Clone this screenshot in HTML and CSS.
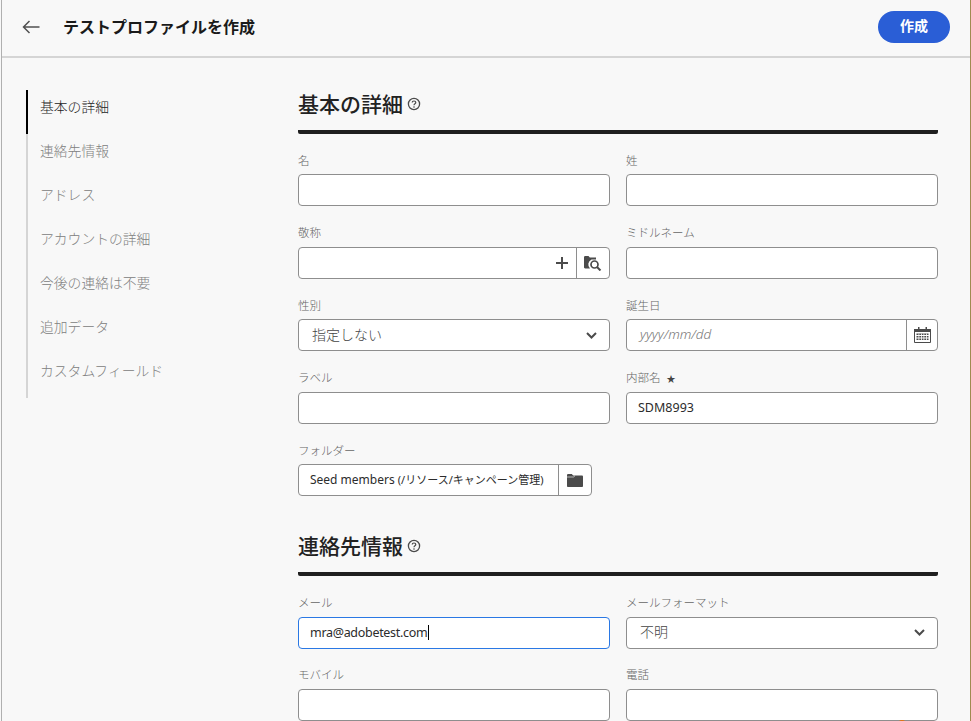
FILE: index.html
```html
<!DOCTYPE html>
<html lang="ja">
<head>
<meta charset="utf-8">
<title>テストプロファイルを作成</title>
<link rel="stylesheet" href="styles.css">
</head>
<body>
<div class="app">
  <header class="topbar">
    <svg class="back" width="18" height="14" viewBox="0 0 18 14"><path d="M17.500 7H1.500M7.500 1 1.500 7l6 6" fill="none" stroke="#505050" stroke-width="1.500"/></svg>
    <h1 class="title">テストプロファイルを作成</h1>
    <button class="primary">作成</button>
  </header>
  <div class="body">
    <nav class="side">
      <a class="nav active">基本の詳細</a>
      <a class="nav">連絡先情報</a>
      <a class="nav">アドレス</a>
      <a class="nav">アカウントの詳細</a>
      <a class="nav">今後の連絡は不要</a>
      <a class="nav">追加データ</a>
      <a class="nav">カスタムフィールド</a>
    </nav>
    <main class="main">
      <section class="sec">
        <h2 class="head">基本の詳細
          <svg class="help" width="14" height="14" viewBox="0 0 14 14"><circle cx="7" cy="7" r="5.600" fill="none" stroke="#4b4b4b" stroke-width="1.300"/><path d="M5.200 5.600c0-1 .8-1.600 1.800-1.600s1.800.6 1.800 1.500c0 1.300-1.800 1.300-1.800 2.700" fill="none" stroke="#4b4b4b" stroke-width="1.200"/><circle cx="7" cy="10" r=".8" fill="#4b4b4b"/></svg>
        </h2>
        <div class="grid">
          <div class="field"><label class="lab">名</label><div class="box"></div></div>
          <div class="field"><label class="lab">姓</label><div class="box"></div></div>
          <div class="field"><label class="lab">敬称</label>
            <div class="box split"><span class="fill"></span>
              <svg class="plus" width="12" height="12" viewBox="0 0 12 12"><path d="M6 0v12M0 6h12" stroke="#4b4b4b" stroke-width="2"/></svg>
              <span class="btn wide"><svg width="18" height="16" viewBox="0 0 18 16"><path d="M0 2.500C0 1.500.5 1 1.200 1h3.300l1.300 1.500H12v2H7.500a5.500 5.500 0 0 0-1.500 9H1.200C.5 13.500 0 13 0 12.300Z" fill="#4b4b4b"/><circle cx="10.500" cy="9.500" r="3.500" fill="none" stroke="#4b4b4b" stroke-width="1.700"/><path d="m13 12 3.500 3.500" stroke="#4b4b4b" stroke-width="2"/></svg></span>
            </div>
          </div>
          <div class="field"><label class="lab">ミドルネーム</label><div class="box"></div></div>
          <div class="field"><label class="lab">性別</label>
            <div class="box select"><span class="val">指定しない</span>
              <svg class="chev" width="11" height="7" viewBox="0 0 11 7"><path d="M1 1l4.500 4.500L10 1" fill="none" stroke="#4b4b4b" stroke-width="2"/></svg></div>
          </div>
          <div class="field"><label class="lab">誕生日</label>
            <div class="box split"><span class="ph fill">yyyy/mm/dd</span>
              <span class="btn"><svg width="17" height="16" viewBox="0 0 17 16"><path d="M.5 2.500h16v13H.5Z" fill="none" stroke="#4b4b4b"/><path d="M0 2h17v3H0ZM4 0h1.500v3H4ZM11.500 0H13v3h-1.500Z" fill="#4b4b4b"/><path d="M2.500 6.500h12v1.400h-12ZM2.500 9h12v1.400h-12ZM2.500 11.500h12v1.400h-12Z" fill="#4b4b4b"/><path d="M4.500 6.500h.8v7h-.8ZM7 6.500h.8v7H7ZM9.500 6.500h.8v7h-.8ZM12 6.500h.8v7H12Z" fill="#fff"/></svg></span>
            </div>
          </div>
          <div class="field"><label class="lab">ラベル</label><div class="box"></div></div>
          <div class="field"><label class="lab">内部名 <span class="req">★</span></label><div class="box"><span class="val txt">SDM8993</span></div></div>
          <div class="field"><label class="lab">フォルダー</label>
            <div class="box split folder"><span class="val txt2">Seed members <span class="jp">(/リソース/キャンペーン管理)</span></span>
              <span class="btn wide"><svg width="16" height="13" viewBox="0 0 16 13"><path d="M0 1.300C0 .6.400 0 1.100 0h3.700l1.300 1.500h8.800c.6 0 1.100.5 1.100 1.100v9.300c0 .6-.5 1.100-1.100 1.100H1.100C.5 13 0 12.500 0 11.900Z" fill="#4b4b4b"/><path d="M0 3h6.500L8 1.800" fill="none" stroke="#fff" stroke-width=".6"/></svg></span>
            </div>
          </div>
        </div>
      </section>
      <section class="sec second">
        <h2 class="head">連絡先情報
          <svg class="help" width="14" height="14" viewBox="0 0 14 14"><circle cx="7" cy="7" r="5.600" fill="none" stroke="#4b4b4b" stroke-width="1.300"/><path d="M5.200 5.600c0-1 .8-1.600 1.800-1.600s1.800.6 1.800 1.500c0 1.300-1.800 1.300-1.800 2.700" fill="none" stroke="#4b4b4b" stroke-width="1.200"/><circle cx="7" cy="10" r=".8" fill="#4b4b4b"/></svg>
        </h2>
        <div class="grid">
          <div class="field"><label class="lab">メール</label><div class="box focus"><span class="val txt mail">mra@adobetest.com</span><span class="caret"></span></div></div>
          <div class="field"><label class="lab">メールフォーマット</label>
            <div class="box select"><span class="val">不明</span>
              <svg class="chev" width="11" height="7" viewBox="0 0 11 7"><path d="M1 1l4.500 4.500L10 1" fill="none" stroke="#4b4b4b" stroke-width="2"/></svg></div>
          </div>
          <div class="field"><label class="lab">モバイル</label><div class="box"></div></div>
          <div class="field"><label class="lab">電話</label><div class="box"></div></div>
        </div>
      </section>
    </main>
  </div>
</div>
<span class="blob"></span>
</body>
</html>
```

FILE: styles.css
```css
* { box-sizing: border-box; }
html, body { margin: 0; height: 100%; overflow: hidden; }
body {
  position: relative;
  background: #f8f8f8;
  color: #2c2c2c;
  font-family: "Noto Sans", "Noto Sans CJK JP", sans-serif;
  font-size: 13px;
}
.app {
  height: 721px;
  border-left: 1px solid #b0b0b0;
  margin-left: 1px;
  border-right: 1px solid #a08a50;
  overflow: hidden;
}
.topbar {
  height: 58px;
  display: flex;
  align-items: center;
  padding: 0 20px 3px 20px;
  border-bottom: 2px solid #d5d5d5;
}
.back { flex: none; }
.title {
  margin: 0 0 2px 23px;
  font-size: 16px;
  font-weight: 700;
  color: #1a1a1a;
  flex: 1;
}
.primary {
  width: 72px;
  height: 32px;
  border: 0;
  border-radius: 16px;
  padding: 0 0 3px;
  background: #2a5ed6;
  color: #fff;
  font: 700 14px "Noto Sans CJK JP", sans-serif;
}
.body { display: flex; padding-top: 32px; }
.side {
  flex: none;
  margin-left: 24px;
  align-self: flex-start;
  display: flex;
  flex-direction: column;
  width: 2px;
  overflow: visible;
  background: #d5d5d5;
  height: 308px;
}
.nav {
  display: block;
  flex: none;
  height: 44px;
  line-height: 34px;
  padding-left: 14px;
  white-space: nowrap;
  color: #808080;
  font-size: 13.800px;
  font-weight: 300;
}
.nav.active { color: #222; position: relative; }
.nav.active::before {
  content: "";
  position: absolute;
  left: 0; top: 0;
  width: 2px; height: 44px;
  background: #000;
}
.main { margin-left: 270px; width: 640px; flex: none; }
.head {
  margin: 0;
  height: 44px;
  padding-bottom: 14px;
  display: flex;
  align-items: center;
  gap: 4px;
  font-size: 21px;
  font-weight: 500;
  color: #222;
  border-bottom: 4px solid #1f1f1f;
  border-radius: 0 0 2px 2px;
  white-space: nowrap;
}
.help { margin-top: 2px; }
.grid {
  display: grid;
  grid-template-columns: 312px 312px;
  column-gap: 16px;
  padding-top: 16.500px;
  grid-auto-rows: 72.500px;
}
.field { min-width: 0; }
.lab {
  display: block;
  height: 23.500px;
  line-height: 20px;
  font-size: 11.500px;
  font-weight: 300;
  color: #666;
}
.req { font-size: 9px; color: #444; margin-left: 3px; }
.box {
  height: 32px;
  background: #fff;
  border: 1px solid #8e8e8e;
  border-radius: 4px;
  display: flex;
  align-items: center;
  overflow: hidden;
}
.fill { flex: 1; }
.split .btn {
  flex: none;
  width: 31px;
  height: 100%;
  border-left: 1px solid #8e8e8e;
  display: flex;
  align-items: center;
  justify-content: center;
}
.split .btn.wide { width: 33px; }
.plus { margin-right: 8px; }
.select { justify-content: space-between; padding: 0 12px 0 13px; }
.val { font-size: 14px; font-weight: 300; color: #2c2c2c; }
.select .val { color: #444; margin-top: -3px; }
.txt { padding-left: 11px; font-size: 12.500px; font-weight: 400; }
.mail { letter-spacing: -.3px; }
.txt2 { padding-left: 11px; font-size: 12px; font-weight: 400; flex: 1; white-space: nowrap; margin-top: -2px; }
.jp { font-size: 11px; }
.ph {
  padding-left: 13px;
  font-style: italic;
  font-size: 13.500px;
  font-weight: 300;
  color: #777;
  margin-top: -2px;
}
.folder { width: 294px; }
.focus { border-color: #2a78e4; }
.caret { width: 1px; height: 15px; background: #000; margin-left: 1px; }
.second { padding-top: 19.200px; }
.second .grid { padding-top: 17px; grid-auto-rows: 72.300px; }
.blob {
  position: absolute;
  left: 897px;
  top: 720px;
  width: 10px;
  height: 10px;
  border-radius: 50%;
  background: #e8720c;
}
```
